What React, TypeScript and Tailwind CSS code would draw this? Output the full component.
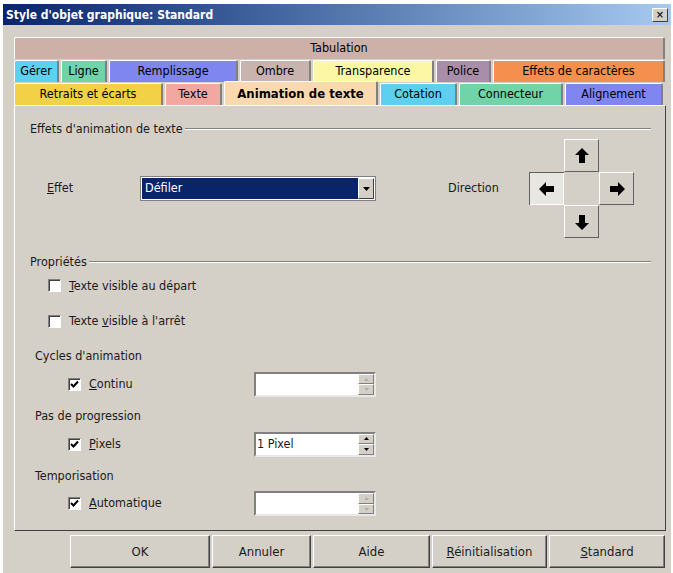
import React from "react";

const F = { fontFamily: '"DejaVu Sans Condensed","DejaVu Sans",sans-serif' };

function Tab({ w, bg, children, sel }: { w: string; bg: string; children: React.ReactNode; sel?: boolean }) {
  return (
    <div className={`${w} ${bg} ${sel ? "h-[24px] -mt-[2px] font-bold text-[13px] border-b-0" : "h-[22px]"} mr-[2px] flex items-center justify-center border-t border-l border-white border-r-2 border-r-[#808080] rounded-t-[2px] text-[12.5px] text-black`}>
      {children}
    </div>
  );
}

function Check({ label, u, pre, rest }: { label?: string; u: string; pre?: string; rest: string }) {
  return (
    <div className="flex items-center gap-[8px]">
      <div className="w-[13px] h-[13px] bg-white border border-t-[#808080] border-l-[#808080] border-r-white border-b-white shadow-[inset_1px_1px_0_#404040] flex items-center justify-center">
        {label && (
          <svg width="9" height="9" viewBox="0 0 9 9"><path d="M1 4 L3.5 6.5 L8 1.5" stroke="black" strokeWidth="2" fill="none" /></svg>
        )}
      </div>
      <span>{pre}<span className="underline">{u}</span>{rest}</span>
    </div>
  );
}

function Spin({ value, dim }: { value?: string; dim?: boolean }) {
  return (
    <div className="w-[122px] h-[25px] bg-white border-2 border-t-[#808080] border-l-[#808080] border-r-[#e8e8e8] border-b-[#e8e8e8] flex">
      <div className="flex-1 pl-[1px] flex items-center text-[12.5px]">{value}</div>
      <div className="w-[16px] flex flex-col">
        {[0, 1].map(i => (
          <div key={i} className="flex-1 bg-[#d4d0c8] border border-t-white border-l-white border-r-[#808080] border-b-[#808080] flex items-center justify-center">
            <svg width="5" height="3" viewBox="0 0 5 3"><path d={i ? "M0 0 L5 0 L2.5 3Z" : "M0 3 L5 3 L2.5 0Z"} fill={dim ? "#b0b0b0" : "black"} /></svg>
          </div>
        ))}
      </div>
    </div>
  );
}

function Arrow({ d }: { d: string }) {
  return (
    <div className="w-[35px] h-[33px] bg-[#d4d0c8] border border-t-white border-l-white border-r-[#606060] border-b-[#606060] flex items-center justify-center">
      <svg width="20" height="20" viewBox="0 0 20 20"><path d={d} fill="black" /></svg>
    </div>
  );
}

function Btn({ w, children }: { w: string; children: React.ReactNode }) {
  return (
    <div className={`${w} h-[33px] mr-[2px] border border-t-white border-l-white border-r-[#404040] border-b-[#404040] shadow-[inset_-1px_-1px_0_#808080] flex items-center justify-center text-[13px]`}>
      {children}
    </div>
  );
}

export default function App() {
  return (
    <div className="w-[673px] h-[573px] bg-white pt-[4px] pl-[3px]" style={F}>
      <div className="w-[668px] h-[569px] bg-[#d4d0c8] text-[12.5px] text-[#1a1a1a]">
        <div className="h-[21px] bg-gradient-to-r from-[#0a246a] to-[#a6caf0] flex items-center justify-between pl-[3px] pr-[3px]">
          <span className="text-white font-bold text-[12px]">Style d'objet graphique: Standard</span>
          <div className="w-[16px] h-[14px] bg-[#d4d0c8] border border-t-white border-l-white border-r-[#404040] border-b-[#404040] flex items-center justify-center text-[11px] font-bold leading-none">×</div>
        </div>
        <div className="pl-[11px] pt-[12px]">
          <div className="flex"><Tab w="w-[651px]" bg="bg-[#cdb0a8]">Tabulation</Tab></div>
          <div className="flex mt-[1px]">
            <Tab w="w-[45px]" bg="bg-[#5bd2f0]">Gérer</Tab>
            <Tab w="w-[46px]" bg="bg-[#70d4a8]">Ligne</Tab>
            <Tab w="w-[129px]" bg="bg-[#7f86f0]">Remplissage</Tab>
            <Tab w="w-[71px]" bg="bg-[#c9b3ae]">Ombre</Tab>
            <Tab w="w-[121px]" bg="bg-[#fbf7a5]">Transparence</Tab>
            <Tab w="w-[55px]" bg="bg-[#a88ea8]">Police</Tab>
            <Tab w="w-[172px]" bg="bg-[#f58f4e]">Effets de caractères</Tab>
          </div>
          <div className="flex mt-[1px] items-end">
            <Tab w="w-[149px]" bg="bg-[#f2d146]">Retraits et écarts</Tab>
            <Tab w="w-[57px]" bg="bg-[#f2a8a0]">Texte</Tab>
            <Tab w="w-[154px]" bg="bg-[#fbd9b0]" sel>Animation de texte</Tab>
            <Tab w="w-[77px]" bg="bg-[#5cd0ee]">Cotation</Tab>
            <Tab w="w-[104px]" bg="bg-[#70d4a8]">Connecteur</Tab>
            <Tab w="w-[98px]" bg="bg-[#7f86f0]">Alignement</Tab>
          </div>
          <div className="w-[652px] h-[426px] border border-t-white border-l-white border-r-[#404040] border-b-[#404040] pl-[15px] pr-[14px] pt-[14px]">
            <div className="flex items-center gap-[2px]"><span>Effets d'animation de texte</span><div className="flex-1 h-[2px] border-t border-[#808080] border-b-white border-b"></div></div>
            <div className="flex items-center mt-[1px] h-[98px] pl-[17px]">
              <span className="w-[93px]"><span className="underline">E</span>ffet</span>
              <div className="w-[236px] h-[25px] border border-[#808080] bg-white flex p-[1px]">
                <div className="flex-1 bg-[#0a246a] text-white flex items-center px-[3px] outline-1 outline-dotted outline-[#ffffff]">Défiler</div>
                <div className="w-[16px] bg-[#d4d0c8] border border-t-white border-l-white border-r-[#404040] border-b-[#404040] flex items-center justify-center">
                  <svg width="7" height="4" viewBox="0 0 7 4"><path d="M0 0 L7 0 L3.5 4Z" fill="black" /></svg>
                </div>
              </div>
              <span className="ml-[72px] w-[81px]">Direction</span>
              <div className="grid grid-cols-[35px_35px_35px] grid-rows-[33px_33px_33px]">
                <div />
                <Arrow d="M10 2 L17 9 L13 9 L13 17 L7 17 L7 9 L3 9Z" />
                <div />
                <div className="shadow-[inset_1px_1px_0_#606060,inset_-1px_-1px_0_white] bg-[#e8e6e0] flex items-center justify-center"><svg width="20" height="20" viewBox="0 0 20 20"><path d="M2 10 L9 3 L9 7 L17 7 L17 13 L9 13 L9 17Z" fill="black" /></svg></div>
                <div />
                <Arrow d="M18 10 L11 3 L11 7 L3 7 L3 13 L11 13 L11 17Z" />
                <div />
                <Arrow d="M10 18 L17 11 L13 11 L13 3 L7 3 L7 11 L3 11Z" />
                <div />
              </div>
            </div>
            <div className="flex items-center gap-[2px] mt-[15px]"><span>Propriétés</span><div className="flex-1 h-[2px] border-t border-[#808080] border-b-white border-b"></div></div>
            <div className="pl-[18px] mt-[5px] flex flex-col gap-[17px]">
              <Check u="T" rest="exte visible au départ" />
              <Check pre="Texte " u="v" rest="isible à l'arrêt" />
            </div>
            <div className="pl-[5px] mt-[16px]">Cycles d'animation</div>
            <div className="flex items-center mt-[6px] pl-[38px]"><div className="w-[186px]"><Check label="x" u="C" rest="ontinu" /></div><Spin dim /></div>
            <div className="pl-[5px] mt-[10px]">Pas de progression</div>
            <div className="flex items-center mt-[6px] pl-[38px]"><div className="w-[186px]"><Check label="x" u="P" rest="ixels" /></div><Spin value="1 Pixel" /></div>
            <div className="pl-[5px] mt-[10px]">Temporisation</div>
            <div className="flex items-center mt-[6px] pl-[38px]"><div className="w-[186px]"><Check label="x" u="A" rest="utomatique" /></div><Spin dim /></div>
          </div>
        </div>
        <div className="flex pl-[67px] mt-[4px]">
          <Btn w="w-[140px]">OK</Btn>
          <Btn w="w-[99px]">Annuler</Btn>
          <Btn w="w-[117px]">Aide</Btn>
          <Btn w="w-[115px]"><span><span className="underline">R</span>éinitialisation</span></Btn>
          <Btn w="w-[116px]"><span><span className="underline">S</span>tandard</span></Btn>
        </div>
      </div>
    </div>
  );
}
